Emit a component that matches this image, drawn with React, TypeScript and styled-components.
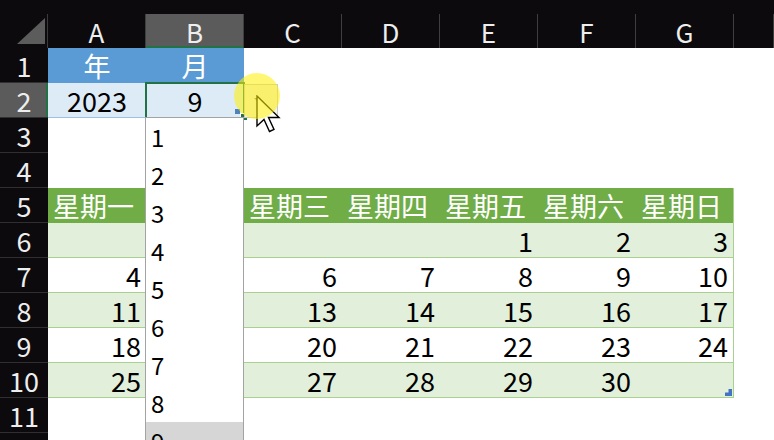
import React from 'react';
import styled, { createGlobalStyle, css } from 'styled-components';

const Global = createGlobalStyle`
  html, body { margin: 0; padding: 0; background: #fff; overflow: hidden; }
  body { font-family: "Noto Sans CJK SC", "Noto Sans", sans-serif; }
`;

type Tone = 'plain' | 'blueHead' | 'blueBody' | 'greenHead' | 'greenBand' | 'greenRow';

const Page = styled.div`
  width: 774px;
  height: 440px;
  overflow: hidden;
  background: #fff;
  display: flex;
  flex-direction: column;
`;

const TopStrip = styled.div`
  height: 14px;
  flex: none;
  background: #0c0a0d;
`;

const Sheet = styled.div`
  display: grid;
  grid-template-columns: 48px repeat(7, 98px) 1fr;
  grid-template-rows: 34px repeat(12, 35px);
`;

const Corner = styled.div`
  display: flex;
  align-items: flex-end;
  justify-content: flex-end;
  padding: 0 2px 4px 0;
  background: #0c0a0d;
  border-right: 1px solid #3a3a3a;
  box-sizing: border-box;
`;

const CornerTriangle = styled.div`
  width: 28px;
  height: 26px;
  background: #5c5c5c;
  clip-path: polygon(100% 0, 100% 100%, 0 100%);
`;

const ColHeader = styled.div<{ $selected?: boolean }>`
  display: flex;
  align-items: center;
  justify-content: center;
  box-sizing: border-box;
  background: ${(p) => (p.$selected ? '#5b5b5b' : '#0c0a0d')};
  border-right: 1px solid #3f3f3f;
  color: #eeeeee;
  font-size: 26px;
  line-height: 1;
  padding-top: 2px;
  ${(p) => p.$selected && css`box-shadow: inset 0 -2px 0 #217346;`}
`;

const RowHeader = styled.div<{ $selected?: boolean }>`
  display: flex;
  align-items: center;
  justify-content: center;
  box-sizing: border-box;
  background: ${(p) => (p.$selected ? '#5b5b5b' : '#0c0a0d')};
  border-bottom: 1px solid #2f2f2f;
  color: #eeeeee;
  font-size: 27px;
  line-height: 1;
  ${(p) => p.$selected && css`box-shadow: inset -2px 0 0 #217346;`}
`;

const toneStyles: Record<Tone, ReturnType<typeof css>> = {
  plain: css`background: #fff; color: #000;`,
  blueHead: css`background: #5b9bd5; color: #fff;`,
  blueBody: css`background: #ddebf7; color: #000; border-bottom: 1px solid #9bc2e6;`,
  greenHead: css`background: #70ad47; color: #fff;`,
  greenBand: css`background: #e2efda; color: #000; border-bottom: 1px solid #a9d08e;`,
  greenRow: css`background: #fff; color: #000; border-bottom: 1px solid #a9d08e;`,
};

const Cell = styled.div<{ $tone: Tone; $align: 'left' | 'center' | 'right'; $edge?: boolean; $active?: boolean }>`
  position: relative;
  display: flex;
  align-items: center;
  box-sizing: border-box;
  padding: 0 5px;
  font-size: 27px;
  line-height: 1;
  white-space: nowrap;
  justify-content: ${(p) => (p.$align === 'left' ? 'flex-start' : p.$align === 'right' ? 'flex-end' : 'center')};
  ${(p) => toneStyles[p.$tone]}
  ${(p) => p.$edge && css`border-right: 1px solid #a9d08e;`}
  ${(p) => p.$active && css`outline: 2px solid #217346; outline-offset: -1px; z-index: 2;`}
`;

/* small table-resize marker of the blue table, in the active cell's corner */
const BlueHandle = styled.div`
  position: absolute;
  right: 4px;
  bottom: 3px;
  width: 5px;
  height: 5px;
  background: #4f81bd;
`;

/* L-shaped table-resize marker of the green table */
const CornerHandle = styled.div`
  position: absolute;
  right: 1px;
  bottom: 1px;
  width: 7px;
  height: 7px;
  background: #4472c4;
  clip-path: polygon(100% 0, 100% 100%, 0 100%, 0 50%, 50% 50%, 50% 0);
`;

const FillHandle = styled.div`
  position: absolute;
  right: -4px;
  bottom: -4px;
  width: 6px;
  height: 6px;
  background: #217346;
  border: 1px solid #fff;
`;

/* validation list, hanging below the active cell */
const Dropdown = styled.div`
  position: absolute;
  left: -1px;
  top: 100%;
  width: 99px;
  height: 340px;
  box-sizing: border-box;
  background: #fff;
  border: 1px solid #a3a3a3;
  display: flex;
  flex-direction: column;
`;

const DropItem = styled.div<{ $hover?: boolean }>`
  height: 38px;
  flex: none;
  display: flex;
  align-items: center;
  padding-left: 5px;
  font-size: 24px;
  line-height: 1;
  color: #000;
  background: ${(p) => (p.$hover ? '#d6d6d6' : 'transparent')};
`;

/* drop-down arrow button, beside the active cell */
const DropButton = styled.div`
  position: absolute;
  left: 100%;
  top: 1px;
  width: 34px;
  height: 34px;
  box-sizing: border-box;
  background: #f2f2f2;
  border: 1px solid #c8c8c8;
  display: flex;
  align-items: center;
  justify-content: center;
`;

const Cursor = styled.svg`
  position: absolute;
  left: 11px;
  top: 10px;
`;

const Spot = styled.div`
  position: absolute;
  left: -11px;
  top: -12px;
  width: 46px;
  height: 46px;
  border-radius: 50%;
  background: rgba(255, 240, 0, 0.55);
`;

const cols = ['A', 'B', 'C', 'D', 'E', 'F', 'G'];

type CellDef = { text: string; tone: Tone; align: 'left' | 'center' | 'right' };

const weekdays = ['星期一', '', '星期三', '星期四', '星期五', '星期六', '星期日'];
const weeks: string[][] = [
  ['', '', '', '', '1', '2', '3'],
  ['4', '', '6', '7', '8', '9', '10'],
  ['11', '', '13', '14', '15', '16', '17'],
  ['18', '', '20', '21', '22', '23', '24'],
  ['25', '', '27', '28', '29', '30', ''],
];

function buildRow(r: number): CellDef[] {
  const blank = (): CellDef => ({ text: '', tone: 'plain', align: 'left' });
  if (r === 1) {
    return cols.map((_, i) =>
      i === 0 ? { text: '年', tone: 'blueHead', align: 'center' } :
      i === 1 ? { text: '月', tone: 'blueHead', align: 'center' } : blank()
    );
  }
  if (r === 2) {
    return cols.map((_, i) =>
      i === 0 ? { text: '2023', tone: 'blueBody', align: 'center' } :
      i === 1 ? { text: '9', tone: 'blueBody', align: 'center' } : blank()
    );
  }
  if (r === 5) {
    return weekdays.map((w) => ({ text: w, tone: 'greenHead', align: 'left' }));
  }
  if (r >= 6 && r <= 10) {
    const tone: Tone = r % 2 === 0 ? 'greenBand' : 'greenRow';
    return weeks[r - 6].map((t) => ({ text: t, tone, align: 'right' }));
  }
  return cols.map(blank);
}

const dropValues = ['1', '2', '3', '4', '5', '6', '7', '8', '9'];

function ListPopup() {
  return (
    <>
      <BlueHandle />
      <FillHandle />
      <DropButton>
        <svg width="32" height="32" viewBox="0 0 32 32">
          <path d="M9 13 L15 13 L12 16 Z" fill="#8a8a8a" />
        </svg>
        <Cursor width="26" height="40" viewBox="0 0 26 40">
          <path
            d="M1 1 L1 31 L8 24.5 L13.5 36.5 L18 34.5 L12.5 22.5 L23 22.5 Z"
            fill="#ffffff"
            stroke="#000000"
            strokeWidth="1.4"
          />
        </Cursor>
        <Spot />
      </DropButton>
      <Dropdown>
        {dropValues.map((v) => (
          <DropItem key={v} $hover={v === '9'}>{v}</DropItem>
        ))}
      </Dropdown>
    </>
  );
}

export default function App() {
  const rows = Array.from({ length: 12 }, (_, i) => i + 1);
  return (
    <Page>
      <Global />
      <TopStrip />
      <Sheet>
        <Corner>
          <CornerTriangle />
        </Corner>
        {cols.map((c) => (
          <ColHeader key={c} $selected={c === 'B'}>{c}</ColHeader>
        ))}
        <ColHeader />
        {rows.map((r) => {
          const defs = buildRow(r);
          return (
            <React.Fragment key={r}>
              <RowHeader $selected={r === 2}>{r}</RowHeader>
              {defs.map((d, i) => {
                const isG = i === 6 && r >= 5 && r <= 10;
                const active = r === 2 && i === 1;
                return (
                  <Cell key={i} $tone={d.tone} $align={d.align} $edge={isG} $active={active}>
                    {d.text}
                    {active && <ListPopup />}
                    {r === 10 && i === 6 && <CornerHandle />}
                  </Cell>
                );
              })}
              <Cell $tone="plain" $align="left" />
            </React.Fragment>
          );
        })}
      </Sheet>
    </Page>
  );
}
